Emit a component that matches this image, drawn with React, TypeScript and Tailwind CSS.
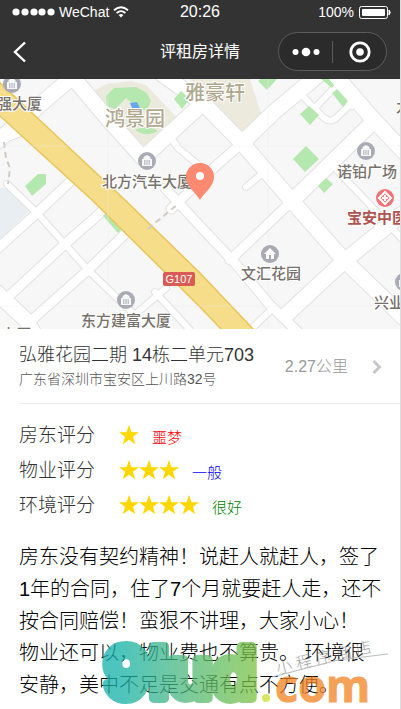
import React from "react";

interface Rating {
  label: string;
  stars: number;
  comment: string;
  color: string;
}

interface Place {
  name: string;
  x: number;
  y: number;
  className: string;
}

const ratings: Rating[] = [
  { label: "房东评分", stars: 1, comment: "噩梦", color: "text-[#ff0000]" },
  { label: "物业评分", stars: 3, comment: "一般", color: "text-[#0000ff]" },
  { label: "环境评分", stars: 4, comment: "很好", color: "text-[#008000]" },
];

const review = `房东没有契约精神！说赶人就赶人，签了1年的合同，住了7个月就要赶人走，还不按合同赔偿！蛮狠不讲理，大家小心！
物业还可以，物业费也不算贵。 环境很安静，美中不足是交通有点不方便。`;

const SMALL = "text-[15px] font-medium fill-[#77716b]";
const LARGE = "text-[20px] font-medium fill-[#b0a990]";

const places: Place[] = [
  { name: "强大厦", x: -3, y: 109, className: SMALL },
  { name: "鸿景园", x: 105, y: 126, className: LARGE },
  { name: "雅豪轩", x: 185, y: 100, className: LARGE },
  { name: "北方汽车大厦", x: 102, y: 187, className: SMALL },
  { name: "诺铂广场", x: 337, y: 177, className: SMALL },
  { name: "宝安中医院", x: 347, y: 223, className: "text-[15px] font-bold fill-[#b0524f]" },
  { name: "文汇花园", x: 241, y: 279, className: SMALL },
  { name: "兴业", x: 374, y: 308, className: SMALL },
  { name: "东方建富大厦", x: 81, y: 326, className: SMALL },
  { name: "大厦", x: 1, y: 340, className: SMALL },
  { name: "九", x: 396, y: 112, className: SMALL },
];

const smallRoads = [
  "M170 136 L178 148 L202 168",
  "M300 93 L318 112 Q328 124 335 119 L354 101",
  "M315 108 L333 89 L352 106",
  "M246 187 L263 173",
  "M7 184 L37 213 L88 270 L142 322",
  "M333 166 L373 208 L402 239",
  "M131 318 L166 288",
  "M155 292 L190 330",
  "M250 330 L270 311",
];

const mediumRoads = [
  "M74 178 L37 213 L-4 250",
  "M106 208 L65 244 L7 298",
  "M128 231 L88 270 L34 318",
  "M165 188 L200 226 L234 262 L270 305 L298 332",
  "M292 201 L230 260",
  "M171 209 L217 165 L242 143",
];

const largeRoads = [
  "M70 74 L108 119 L143 158 L202 104",
  "M162 74 L204 104 L242 143 L292 201 L343 259 L404 318",
  "M242 143 L274 112 L322 72",
  "M334 74 L372 118 L404 152",
  "M373 122 L334 160 L292 201",
  "M402 214 L343 262 L285 316",
  "M-4 142 L20 122 L70 79",
  "M-4 292 L28 322 L34 334",
];

const RoadLayer = ({ roads, width }: { roads: string[]; width: number }) => (
  <>
    {roads.map((d) => (
      <path key={d} d={d} strokeWidth={width} />
    ))}
  </>
);

const Building = ({ x, y }: { x: number; y: number }) => (
  <g transform={`translate(${x} ${y})`}>
    <circle r="9" fill="#a9aab5" />
    <path d="M-5 5 V-2 H-3.5 V-4 L0 -6 L3.5 -4 V-2 H5 V5 Z" fill="#fff" opacity="0.9" />
    <path d="M-2.2 4 V-1 M0 4 V-1 M2.2 4 V-1" stroke="#a9aab5" strokeWidth="1" />
  </g>
);

const Map = () => (
  <svg
    viewBox="0 79 400 250"
    preserveAspectRatio="xMidYMid slice"
    className="block w-full bg-[#f7f7f7]"
    role="img"
    aria-label="地图"
  >
    <path d="M0 188 H9 L31 209 L0 240 Z" fill="#e8eef2" />
    <path d="M88 95 L106 84 L131 81 L146 85 L180 121 L140 152 Z" fill="#eceadd" />
    <path d="M190 79 H250 L263 119 L248 134 H234 L204 104 Z" fill="#eceadd" />
    <path d="M106 96 L114 88 L136 87 L147 93 L151 101 L147 110 L140 110 L126 98 L115 109 L107 106 Z" fill="#b5e8ae" />
    <path d="M135 130 Q146 124 158 131 Q148 138 135 130 Z" fill="#b5e8ae" />
    <path d="M130 103 L137 102 L140 108 H132 Z" fill="#68a7ef" />

    <g fill="none" stroke="#e2e2e2" strokeLinejoin="round" strokeLinecap="round">
      <RoadLayer roads={smallRoads} width={8} />
      <RoadLayer roads={mediumRoads} width={11} />
      <RoadLayer roads={largeRoads} width={17} />
      <path d="M34 120 L12 114 M30 128 L10 136" strokeWidth="10" />
    </g>
    <g fill="none" stroke="#fff" strokeLinejoin="round" strokeLinecap="round">
      <RoadLayer roads={smallRoads} width={6} />
      <RoadLayer roads={mediumRoads} width={9} />
      <RoadLayer roads={largeRoads} width={15} />
      <path d="M34 120 L12 114 M30 128 L10 136" strokeWidth="8" />
    </g>

    <g fill="#b5e8ae">
      <path d="M174 99 L181 91 L190 99 L182 109 Z" />
      <path d="M258 81 L261 79 H277 L267 90 Z" />
      <path d="M321 79 H329 L334 85 L332 88 Z" />
      <path d="M332 93 L337 89 L348 101 L343 107 Z" />
      <path d="M300 114 L309 106 L319 115 L310 125 Z" />
      <path d="M293 159 L306 146 L319 159 L305 172 Z" />
      <path d="M318 186 L326 178 L333 184 L324 193 Z" />
      <path d="M25 186 L38 174 L46 174 V184 L32 196 Z" />
      <path d="M103 216 L107 212 L123 228 L118 233 Z" />
    </g>

    <path d="M0 82 L125 200 L200 273 L254 330 H222 L200 307 L92 200 L0 115 Z" fill="#f6dd8a" />
    <path
      d="M-1 82 L125 200 L200 273 L254 330 M222 330 L200 307 L92 200 L-1 115"
      fill="none"
      stroke="#e8c558"
      strokeWidth="1.5"
    />
    <path d="M4 142 L6 158 L10 168 L8 184" fill="none" stroke="#cfccc0" strokeWidth="2" strokeDasharray="6 4" />
    <path d="M148 229 L178 204" fill="none" stroke="#cfccc0" strokeWidth="2" strokeDasharray="6 4" />
    <path d="M108 79 V329 M268 79 V329 M0 146 H400 M0 306 H400" stroke="#eeeeee" strokeWidth="1" opacity="0.4" />

    <rect x="163" y="272" width="32" height="14" rx="2" fill="#da5b56" />
    <text x="179" y="283" textAnchor="middle" className="text-[11px] fill-white">
      G107
    </text>

    <Building x={12} y={84} />
    <Building x={147} y={161} />
    <Building x={366} y={151} />
    <Building x={126} y={300} />
    <Building x={404} y={282} />
    <circle cx="270" cy="254" r="9" fill="#a9aab5" />
    <path d="M264 254 L270 248 L276 254 H274 V259 H271 V255 H269 V259 H266 V254 Z" fill="#fff" />
    <circle cx="385" cy="198" r="9" fill="#ee7377" />
    <path d="M385 192 L391 198 L385 204 L379 198 Z" fill="none" stroke="#fff" strokeWidth="2" />
    <path d="M385 195 V201 M382 198 H388" stroke="#fff" strokeWidth="2" />

    {places.map((place) => (
      <text
        key={place.name}
        x={place.x}
        y={place.y}
        stroke="#fff"
        strokeWidth="2"
        paintOrder="stroke"
        className={place.className}
      >
        {place.name}
      </text>
    ))}

    <path d="M200 200 C195 192 186 186 186 177 A14 14 0 0 1 214 177 C214 186 205 192 200 200 Z" fill="#fb8a70" />
    <circle cx="200" cy="176" r="4" fill="#fff" />
  </svg>
);

const Star = () => (
  <svg viewBox="0 0 20 20" className="size-5" fill="#ffd700" aria-hidden="true">
    <path d="M10 0 L12.5 7.2 H20 L14 11.7 L16.2 19.2 L10 14.7 L3.8 19.2 L6 11.7 L0 7.2 H7.5 Z" />
  </svg>
);

const StatusBar = () => (
  <div className="grid grid-cols-3 items-center h-6 px-3 text-sm">
    <div className="flex items-center gap-1">
      <svg viewBox="0 0 43 8" className="w-[43px] h-2" fill="#fff" aria-hidden="true">
        {[4, 13, 22, 30, 39].map((cx) => (
          <circle key={cx} cx={cx} cy="4" r="3.6" />
        ))}
      </svg>
      <span>WeChat</span>
      <svg viewBox="0 0 16 12" className="w-4 h-3" fill="none" stroke="#fff" aria-hidden="true">
        <path d="M1 4.2 Q8 -1.8 15 4.2" strokeWidth="1.8" />
        <path d="M3.6 7 Q8 3.2 12.4 7" strokeWidth="1.8" />
        <path d="M5.6 9 Q8 7 10.4 9 L8 11.6 Z" fill="#fff" stroke="none" />
      </svg>
    </div>
    <span className="text-center text-base">20:26</span>
    <div className="flex items-center justify-end gap-1 -mr-1">
      <span>100%</span>
      <svg viewBox="0 0 34 14" className="w-[34px] h-[14px]" aria-hidden="true">
        <rect x="1.5" y="1.5" width="28" height="12" rx="2" fill="none" stroke="#fff" />
        <rect x="4" y="4" width="23" height="7" rx="1" fill="#fff" />
        <path d="M31 5 Q33.5 7.5 31 10 Z" fill="#fff" stroke="#fff" />
      </svg>
    </div>
  </div>
);

const Header = () => (
  <header className="bg-[#333333] text-white pb-2">
    <StatusBar />
    <div className="grid grid-cols-[1fr_auto_1fr] items-center pt-2 px-[13px]">
      <button type="button" aria-label="返回" className="w-4">
        <svg viewBox="0 0 14 22" className="w-[14px] h-[22px]" fill="none" stroke="#fff" strokeWidth="2.4">
          <path d="M12 1.5 L2 11 L12 20.5" />
        </svg>
      </button>
      <h1 className="text-base">评租房详情</h1>
      <div className="justify-self-end flex items-center h-[39px] w-[109px] rounded-full border border-[#5c5c5c] bg-[#2b2b2b]">
        <button type="button" aria-label="更多" className="flex-1 flex justify-center">
          <svg viewBox="0 0 28 10" className="w-7 h-[10px]" fill="#fff">
            <circle cx="3.5" cy="5" r="3" />
            <circle cx="14" cy="5" r="4.3" />
            <circle cx="24.5" cy="5" r="3" />
          </svg>
        </button>
        <span className="w-px h-[22px] bg-[#5c5c5c]" />
        <button type="button" aria-label="关闭" className="flex-1 flex justify-center">
          <svg viewBox="0 0 22 22" className="size-[22px]">
            <circle cx="11" cy="11" r="9.2" fill="none" stroke="#fff" strokeWidth="2.8" />
            <circle cx="11" cy="11" r="3.8" fill="#fff" />
          </svg>
        </button>
      </div>
    </div>
  </header>
);

// Semi-transparent site mark that lies over the end of the review
const Watermark = () => (
  <svg
    viewBox="100 636 300 72"
    className="absolute left-[100px] top-28 w-[300px] h-[72px] pointer-events-none"
    aria-hidden="true"
  >
    <defs>
      <linearGradient id="mark" gradientUnits="userSpaceOnUse" x1="104" y1="0" x2="256" y2="0">
        <stop offset="0.1" stopColor="#12b1a9" />
        <stop offset="0.5" stopColor="#4bb87f" />
        <stop offset="1" stopColor="#7cc243" />
      </linearGradient>
    </defs>
    <g opacity="0.75">
      <text
        x="104"
        y="698"
        fill="url(#mark)"
        stroke="url(#mark)"
        strokeWidth="10"
        strokeLinejoin="round"
        className="font-[Inter] text-[70px] font-bold"
      >
        9lud
      </text>
      <circle cx="266" cy="698" r="4" fill="#cbe030" />
      <text
        x="275"
        y="702"
        fill="#f28220"
        stroke="#f28220"
        strokeWidth="1"
        className="font-['Open_Sans'] text-[45px] font-bold"
      >
        com
      </text>
    </g>
    <g transform="rotate(-13 282 676)" opacity="0.6">
      <text x="278" y="673" className="text-base font-light fill-[#666666]">
        小 程 序 商 店
      </text>
    </g>
    <path d="M272 677 L338 660 L388 654" fill="none" stroke="#bbbbbb" strokeWidth="1" />
  </svg>
);

const App = () => {
  return (
    <div className="min-h-screen overflow-hidden bg-white border-r border-[#dddddd] font-['Liberation_Sans','Noto_Sans_CJK_SC',sans-serif]">
      <Header />
      <Map />
      <main className="pl-[19px]">
        <a href="#map" className="flex items-center justify-between h-[75px] pt-[2px] pr-[18px] border-b border-[#eeeeee]">
          <div>
            <h2 className="text-[18px] leading-6 text-[#333333] font-light">弘雅花园二期 14栋二单元703</h2>
            <p className="text-sm leading-6 text-[#555555] font-light">广东省深圳市宝安区上川路32号</p>
          </div>
          <div className="flex items-center gap-6 text-base text-[#999999] font-light">
            <span>2.27公里</span>
            <svg viewBox="0 0 10 14" className="w-[10px] h-[14px]" fill="none" stroke="#c7c7cc" strokeWidth="3">
              <path d="M1.5 1 L7.5 7 L1.5 13" />
            </svg>
          </div>
        </a>
        <ul className="pt-[15px]">
          {ratings.map((rating) => (
            <li key={rating.label} className="flex items-center h-[35px]">
              <span className="w-[100px] text-[19px] text-[#333333] font-light">{rating.label}</span>
              <span className="flex mb-1" role="img" aria-label={`${rating.stars}星`}>
                {Array.from({ length: rating.stars }, (_, i) => (
                  <Star key={i} />
                ))}
              </span>
              <span className={`ml-[13px] mt-1 text-[15px] font-light ${rating.color}`}>{rating.comment}</span>
            </li>
          ))}
        </ul>
      </main>
      <section className="relative pt-[17px] pl-[19px] pr-[17px]">
        <p className="text-[20px] leading-8 text-black font-light whitespace-pre-line">{review}</p>
        <Watermark />
      </section>
    </div>
  );
};

export default App;
